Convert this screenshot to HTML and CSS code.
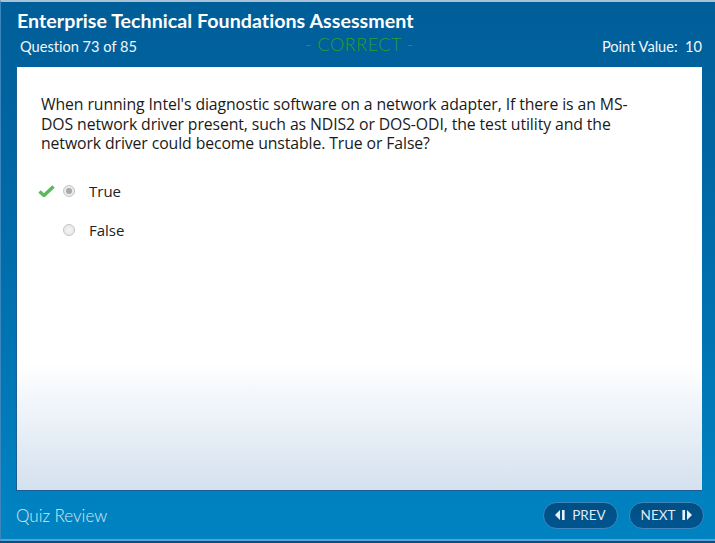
FILE: index.html
```html
<!DOCTYPE html>
<html>
<head>
<meta charset="utf-8">
<link rel="stylesheet" href="styles.css">
</head>
<body>
<div class="frame">
  <header class="header">
    <h1 class="title">Enterprise Technical Foundations Assessment</h1>
    <div class="subbar">
      <span class="qnum">Question 73 of 85</span>
      <span class="status">- CORRECT -</span>
      <span class="points">Point Value:&nbsp; 10</span>
    </div>
  </header>
  <main class="panel">
    <p class="question">When running Intel's diagnostic software on a network adapter, If there is an MS-DOS network driver present, such as NDIS2 or DOS-ODI, the test utility and the network driver could become unstable. True or False?</p>
    <ul class="options">
      <li class="option">
        <span class="mark"><svg width="17" height="12" viewBox="0 0 17 12"><path d="M1.5 6.5 L6 10.5 L15.5 1.5" fill="none" stroke="#5cb85c" stroke-width="3.4" stroke-linejoin="round"/></svg></span>
        <span class="radio checked"></span>
        <span class="label">True</span>
      </li>
      <li class="option">
        <span class="mark"></span>
        <span class="radio"></span>
        <span class="label">False</span>
      </li>
    </ul>
  </main>
  <footer class="footer">
    <span class="review">Quiz Review</span>
    <div class="nav">
      <button class="btn"><svg width="11" height="10" viewBox="0 0 11 10"><path d="M5 0 L0 5 L5 10 Z" fill="#e8f0f8"/><rect x="7" y="0" width="2.6" height="10" fill="#e8f0f8"/></svg>PREV</button>
      <button class="btn">NEXT<svg width="11" height="10" viewBox="0 0 11 10"><rect x="1.4" y="0" width="2.6" height="10" fill="#e8f0f8"/><path d="M6 0 L11 5 L6 10 Z" fill="#e8f0f8"/></svg></button>
    </div>
  </footer>
</div>
</body>
</html>
```
FILE: styles.css
```css
* { box-sizing: border-box; }
html, body { margin: 0; padding: 0; }
body {
  width: 715px;
  height: 543px;
  background: #0a4f80;
  overflow: hidden;
}
.frame {
  width: 715px;
  height: 541px;
  border-top: 2px solid #a8c2d8;
  border-left: 1px solid #3a86bd;
  border-bottom: 2px solid #5fa0cc;
  background: linear-gradient(to bottom, #005e98 0%, #006aa8 40%, #0080bf 90%, #0083c2 100%);
  display: flex;
  flex-direction: column;
  font-family: Lato, "Open Sans", sans-serif;
  font-variant-ligatures: none;
}
.header {
  height: 65px;
  padding: 7px 13px 0 16px;
  color: #fff;
}
.title {
  margin: 0;
  font-size: 19.6px;
  font-weight: 700;
  line-height: 24px;
  letter-spacing: 0.05px;
}
.subbar {
  display: flex;
  justify-content: space-between;
  align-items: center;
  height: 22px;
  margin-top: 2px;
}
.qnum { font-size: 14.6px; font-weight: 400; padding-left: 3px; width: 200px; color: #f2f6fa; }
.status { font-size: 18px; font-weight: 300; color: #2f9f2f; letter-spacing: 0.5px; margin-top: -4px; }
.points { font-size: 14.6px; width: 200px; text-align: right; color: #f2f6fa; }
.panel {
  margin: 0 13px 0 15px;
  height: 424px;
  background: linear-gradient(to bottom, #ffffff 0%, #ffffff 70%, #f3f7fb 78%, #d4e1ee 100%);
  border: 1px solid #1d5d92;
  border-top: none;
  border-right: none;
  padding: 28px 44px 0 24px;
  font-family: "Open Sans", sans-serif;
}
.question {
  margin: 0;
  font-size: 15.8px;
  line-height: 19.5px;
  color: #1a1a1a;
  letter-spacing: -0.1px;
}
.options {
  list-style: none;
  margin: 18px 0 0 0;
  padding: 0;
}
.option {
  display: flex;
  align-items: center;
  height: 39px;
  margin-left: -3px;
}
.mark { width: 25px; display: flex; align-items: center; }
.radio {
  width: 12px;
  height: 12px;
  border-radius: 50%;
  border: 1px solid #c4c4c4;
  background: radial-gradient(circle, #f4f4f4 0%, #e4e4e4 100%);
  position: relative;
}
.radio.checked::after {
  content: "";
  position: absolute;
  left: 2px; top: 2px;
  width: 6px; height: 6px;
  border-radius: 50%;
  background: #a8a8a8;
}
.label {
  margin-left: 14px;
  font-size: 15px;
  color: #222;
}
.footer {
  flex: 1;
  display: flex;
  align-items: center;
  justify-content: space-between;
  padding: 0 11px 0 15px;
}
.review {
  font-size: 17px;
  font-weight: 300;
  color: #d6e8f4;
}
.nav { display: flex; gap: 11px; }
.btn {
  width: 75px;
  height: 27px;
  border-radius: 14px;
  border: 1px solid #3d86c0;
  background: linear-gradient(to bottom, #004f85, #00558f);
  color: #dfeaf4;
  font-family: Lato, sans-serif;
  font-size: 13.5px;
  display: flex;
  align-items: center;
  justify-content: center;
  gap: 6px;
  padding: 0;
}
```
